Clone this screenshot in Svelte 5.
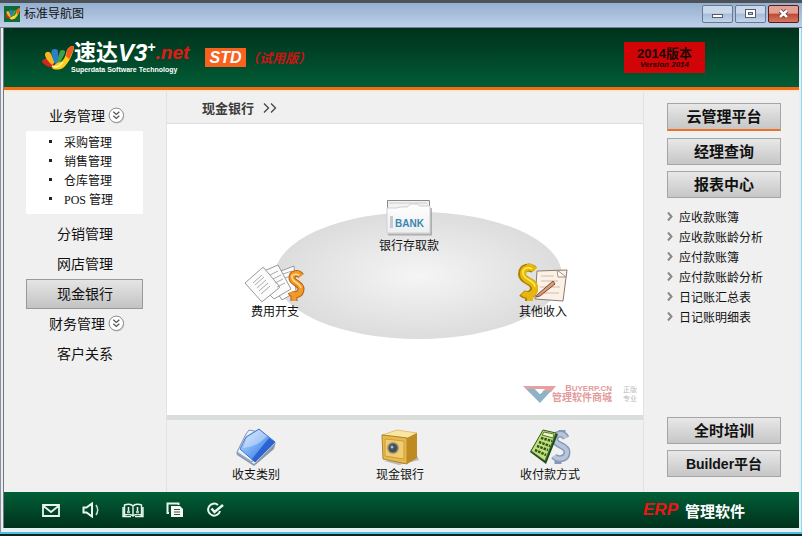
<script>
  const subItems = ['采购管理', '销售管理', '仓库管理', 'POS 管理'];
  const menu = [
    { name: '分销管理' },
    { name: '网店管理' },
    { name: '现金银行', active: true },
    { name: '财务管理', more: true },
    { name: '客户关系' }
  ];
  const reports = ['应收款账簿', '应收款账龄分析', '应付款账簿', '应付款账龄分析', '日记账汇总表', '日记账明细表'];
</script>

{#snippet hand(w, h)}
  <svg width={w} height={h} viewBox="0 0 32 24" aria-hidden="true">
    <path d="M0 15c2-4 8-2 12 2l-1 5C7 21 1 19 0 15z" fill="#d3261d" />
    <path d="M3 8c1-3 5-3 6 0l4 8-3 3C6 15 3 12 3 8z" fill="#f6b61c" />
    <path d="M10 4c2-2 6-1 6 1l1 12-4 1C11 13 8 7 10 4z" fill="#2d7fc4" />
    <path d="M18 5c2-2 6-1 5 2l-5 10-3-1z" fill="#43a047" />
    <path d="M25 4c2-4 7-5 7-3-1 7-5 16-11 21-4 2-9 2-11 0 2-3 5-6 9-6 4-3 5-8 6-12z" fill="#ffcc1a" />
    <path d="M25 4c2-4 7-5 7-3-1 5-3 9-5 12l-3-3c1-2 0-4 1-6z" fill="#ee5a24" />
    <path d="M10 20c4 2 8 0 11-4" fill="none" stroke="#fff3a0" stroke-width="1.5" />
  </svg>
{/snippet}

{#snippet expand()}
  <svg class="expand" width="17" height="17" viewBox="0 0 17 17" aria-hidden="true">
    <circle cx="9" cy="9.3" r="7.2" fill="#ccc" />
    <circle cx="8.3" cy="8.3" r="7.2" fill="#fff" stroke="#8a8a8a" />
    <path d="M5.3 4.8l3 2.7 3-2.7M5.3 8.8l3 2.7 3-2.7" fill="none" stroke="#555" stroke-width="1.3" />
  </svg>
{/snippet}

<div class="window">
  <div class="titlebar">
    <span class="appicon">{@render hand(15, 12)}</span>
    <span class="title">标准导航图</span>
    <button class="win" aria-label="最小化">
      <svg width="29" height="16" viewBox="0 0 29 16"><rect x="9.500" y="8.500" width="10" height="3" fill="#fff" stroke="#555c70" /></svg>
    </button>
    <button class="win" aria-label="最大化">
      <svg width="29" height="16" viewBox="0 0 29 16"><rect x="9.500" y="3.500" width="10" height="8" fill="#fff" stroke="#555c70" /><rect x="12.500" y="6.500" width="4" height="2" fill="#b9cbe2" stroke="#555c70" /></svg>
    </button>
    <button class="win close" aria-label="关闭">
      <svg width="29" height="16" viewBox="0 0 29 16"><path d="M11 4.500l7 6.500M18 4.500l-7 6.500" stroke="#5a2f2f" stroke-width="4" /><path d="M11 4.500l7 6.500M18 4.500l-7 6.500" stroke="#fff" stroke-width="2.500" /></svg>
    </button>
  </div>

  <div class="client">
    <header>
      {@render hand(32, 24)}
      <div class="brand">
        <div class="name"><span>速达</span><i class="v3">V3</i><sup>+</sup><i class="net">.net</i></div>
        <div class="sub">Superdata Software Technology</div>
      </div>
      <span class="std">STD</span>
      <span class="trial">（试用版）</span>
      <div class="version"><b>2014版本</b><i>Version 2014</i></div>
    </header>

    <main>
      <nav class="left">
        <a href="#top" class="item more">业务管理{@render expand()}</a>
        <ul>
          {#each subItems as s}
            <li><a href="#sub">{s}</a></li>
          {/each}
        </ul>
        {#each menu as m}
          <a href="#menu" class="item" class:active={m.active} class:more={m.more}>{m.name}{#if m.more}{@render expand()}{/if}</a>
        {/each}
      </nav>

      <section class="center">
        <h1>现金银行
          <svg width="14" height="10" viewBox="0 0 14 10" aria-hidden="true"><path d="M1 .5L5.500 5 1 9.500M8 .5L12.500 5 8 9.500" fill="none" stroke="#444" stroke-width="1.300" /></svg>
        </h1>
        <div class="canvas">
          <div class="stage">
            <div class="oval"></div>
            <a href="#bank" class="node bank">
              <svg width="46" height="38" viewBox="0 0 46 38" aria-hidden="true">
                <defs>
                  <linearGradient id="bk" x2="0" y2="1"><stop offset="0" stop-color="#fff" /><stop offset="1" stop-color="#eceef0" /></linearGradient>
                </defs>
                <path d="M2 35.500h43V9" fill="none" stroke="#999" stroke-width="2" opacity=".7" />
                <path d="M1.500 1.500h42v9h-42z" fill="#f2f2f2" stroke="#888" />
                <path d="M3 4h38" stroke="#ccc" />
                <path d="M1 34V9h10l3-1h7l4-3h6l3 2h10v27z" fill="url(#bk)" stroke="#d0d0d0" />
                <rect x="4" y="17" width="3" height="12" fill="#c3cbd0" />
                <text x="9" y="28" font-family="Liberation Sans, sans-serif" font-size="10" font-weight="bold" fill="#3c86b0">BANK</text>
              </svg>
              银行存取款
            </a>
            <a href="#expense" class="node expense">
              <svg width="62" height="40" viewBox="0 0 62 40" aria-hidden="true">
                <g fill="#fbfbfb" stroke="#999">
                  <path d="M37 8l13-5 2 26-14 8-8-12z" />
                  <path d="M20 8l14-6 13 24-17 10-14-14z" />
                  <path d="M1 20L18 5q1-1 2 0l15 18q1 1 0 2L19 38q-1 1-2 0z" />
                </g>
                <path d="M9 20l9-8M11 22l9-8M13 25l9-8M15 28l9-8M17 31l9-8M26 12l8-4M29 16l8-4M31 20l8-4M33 24l8-4M39 11l9-3M41 15l6-2" stroke="#aaa" />
                <path d="M57 13c-3-4-9-3-9 2 0 5 9 5 9 11 0 6-8 8-10 3M53 8v4M50 32v6" fill="none" stroke="#b95b0e" stroke-width="7" />
                <path d="M57 13c-3-4-9-3-9 2 0 5 9 5 9 11 0 6-8 8-10 3M53 8v4M50 32v6" fill="none" stroke="#f09a2b" stroke-width="5" />
                <path d="M55 12c-4-2-8 0-7 3 1 4 8 5 9 10" fill="none" stroke="#ffd98a" stroke-width="1.500" />
              </svg>
              费用开支
            </a>
            <a href="#income" class="node income">
              <svg width="52" height="40" viewBox="0 0 52 40" aria-hidden="true">
                <path d="M20 8l30-1-4 31-28-2z" fill="#fbf1e6" stroke="#8a7a6c" />
                <path d="M40 7l1 7h8z" fill="#fff" stroke="#a58e7c" />
                <path d="M24 13h13M24 18h17M23 24h20M22 30h20" stroke="#d7b9a5" />
                <path d="M20 32l16-14 2 3-15 12-4 1z" fill="#d99a78" stroke="#7c4a38" />
                <path d="M17 7C13 3 5 4 5 11c0 8 12 6 12 14 0 8-9 8-12 5M12 1v6M12 31v7" fill="none" stroke="#b27d05" stroke-width="8" />
                <path d="M18 7C14 3 6 4 6 11c0 8 12 6 12 14 0 8-9 8-12 5M13 1v6M13 31v7" fill="none" stroke="#e6b80f" stroke-width="6" />
                <path d="M15 6C10 3 5 6 6 11c1 6 12 6 12 13" fill="none" stroke="#fff04c" stroke-width="1.500" />
              </svg>
              其他收入
            </a>
          </div>
          <div class="mark">
            <svg width="33" height="18" viewBox="0 0 33 18" aria-hidden="true">
              <path d="M0 1h33l-5 6H17l-5-3H3z" fill="#e5a0a2" />
              <path d="M3 4h9l5 5 4-3h7L17 18z" fill="#8fb3c6" />
              <path d="M12 4l5 5 5-5z" fill="#fff" />
            </svg>
            <div class="shop"><span class="domain">B<small>UYERP.CN</small></span><b>管理软件商城</b></div>
            <div class="tags"><span>正版</span><span>专业</span></div>
          </div>
        </div>
        <div class="shortcuts">
          <a href="#type">
            <svg width="42" height="38" viewBox="0 0 42 38" aria-hidden="true">
              <defs><linearGradient id="bl" x1="0" y1="0" x2="1" y2="1"><stop offset="0" stop-color="#d5e9ff" /><stop offset=".5" stop-color="#6da6f2" /><stop offset="1" stop-color="#2459c8" /></linearGradient></defs>
              <path d="M1 24l18 12 22-22-2 7-20 17L2 27z" fill="#8797ad" />
              <path d="M2 24L11 6l3-4 10 2-7 30z" fill="#e9f0fa" stroke="#7d93bb" />
              <path d="M5 21L11 9 24 1l16 13-20 20z" fill="url(#bl)" stroke="#4775c4" />
              <path d="M34 10l6 4-20 20-3-3z" fill="#2b63d2" />
              <path d="M8 20Q22 19 32 8L24 2 12 10z" fill="#fff" opacity=".35" />
            </svg>
            收支类别
          </a>
          <a href="#cash">
            <svg width="38" height="38" viewBox="0 0 38 38" aria-hidden="true">
              <path d="M3 33l15 4 20-5-2-4z" fill="#bbb" />
              <path d="M1 7L16 2l20 3-9 5z" fill="#fbe6a1" stroke="#c39a3a" stroke-width=".5" />
              <path d="M1 7l25 3v26L2 31z" fill="#e6b94f" stroke="#b0832a" />
              <path d="M26 10l10-5v25l-10 6z" fill="#bf8a22" />
              <path d="M4 11l19 2v18L4 28z" fill="#efcc70" stroke="#cf9c35" />
              <circle cx="12" cy="20" r="6" fill="#a59776" /><circle cx="12" cy="20" r="4.500" fill="#454f59" /><circle cx="11" cy="19" r="1.500" fill="#aeb9c2" />
            </svg>
            现金银行
          </a>
          <a href="#pay">
            <svg width="42" height="38" viewBox="0 0 42 38" aria-hidden="true">
              <path d="M37 10c-3-6-12-5-11 2 1 6 12 5 12 12 0 8-10 8-13 4M33 2v5M29 30v6" fill="none" stroke="#8798b4" stroke-width="7" />
              <path d="M37 10c-3-6-12-5-11 2 1 6 12 5 12 12 0 8-10 8-13 4" fill="none" stroke="#b7c5dc" stroke-width="4" />
              <path d="M1 24L14 2l15 4-12 30z" fill="#1f4b1c" />
              <path d="M2 23L14 2l13 3-11 28z" fill="#c6dd7b" stroke="#386522" />
              <path d="M15 4l10 2-1 4-11-3z" fill="#eff7c9" stroke="#52762a" />
              <path d="M12 10l11 3M10 14l11 4M8 18l11 4M6 22l11 5" stroke="#28581f" stroke-width="2.500" stroke-dasharray="2.500 1" />
            </svg>
            收付款方式
          </a>
        </div>
      </section>

      <aside>
        <button class="big cloud">云管理平台</button>
        <button class="big">经理查询</button>
        <button class="big">报表中心</button>
        <ul>
          {#each reports as r}
            <li>
              <svg width="6" height="9" viewBox="0 0 6 9" aria-hidden="true"><path d="M1 .5l3.500 4L1 8.500" fill="none" stroke="#888" stroke-width="2" /></svg>
              <a href="#report">{r}</a>
            </li>
          {/each}
        </ul>
        <div class="grow"></div>
        <button class="big">全时培训</button>
        <button class="big last">Builder平台</button>
      </aside>
    </main>

    <footer>
      <button aria-label="邮件"><svg width="18" height="14" viewBox="0 0 18 14"><path d="M1 2h16v11H1zM1.500 3L9 9l7.500-6" fill="none" stroke="#e9f5ee" stroke-width="1.800" /></svg></button>
      <button aria-label="声音"><svg width="18" height="16" viewBox="0 0 18 16"><path d="M1.500 5.500h3L10 1.500v13l-5.500-4h-3z" fill="none" stroke="#e9f5ee" stroke-width="2" /><path d="M14 3c2 3 2 7 0 10" fill="none" stroke="#c5e0d0" stroke-width="1.500" /></svg></button>
      <button aria-label="帮助"><svg width="22" height="15" viewBox="0 0 22 15"><path d="M11 3C9 .8 5 .8 2.500 2v10C5 11 9 11 11 13c2-2 6-2 8.500-1V2C17 .8 13 .8 11 3zM11 3v10M1 4v9.500h8M21 4v9.500h-8M5 9h3M14 9h3" fill="none" stroke="#e9f5ee" stroke-width="1.400" /><path d="M6.500 4v4M15.500 4v4" stroke="#e9f5ee" stroke-width="1.500" /></svg></button>
      <button aria-label="复制"><svg width="18" height="16" viewBox="0 0 18 16"><path d="M3 11H1.500V1.500h11V3" fill="none" stroke="#e9f5ee" stroke-width="2" /><path d="M5 4h9l3 3v8H5z" fill="#f4faf6" /><path d="M8 7.500h6M8 10h6M8 12.500h6" stroke="#3b5044" stroke-width="1.200" /></svg></button>
      <button aria-label="完成"><svg width="19" height="16" viewBox="0 0 19 16"><path d="M12 3A6 6 0 1 0 14 9" fill="none" stroke="#e9f5ee" stroke-width="2" /><path d="M5.500 6.500l3 3.500L17 3" fill="none" stroke="#e9f5ee" stroke-width="2.500" /></svg></button>
      <span class="erp">ERP</span><b class="soft">管理软件</b>
    </footer>
  </div>
</div>

<style>
  :global(body) { margin: 0; }
  .window {
    box-sizing: border-box;
    min-height: 100vh;
    display: flex;
    flex-direction: column;
    padding: 0 3px 6px 3px;
    border-top: 3px solid #4b5357;
    border-bottom: 2px solid #10202a;
    background: #e6eef5;
    box-shadow: inset 0 -2px #49c3dc, inset -1px 0 #8bdcf0, inset 1px 0 #8e8e9c;
    font-family: "Liberation Sans", "Noto Sans CJK SC", sans-serif;
    color: #111;
  }
  a { color: inherit; text-decoration: none; }
  ul { list-style: none; margin: 0; padding: 0; }
  svg { display: block; flex: none; }
  button { padding: 0; font: inherit; color: inherit; cursor: pointer; }

  .titlebar {
    height: 24px;
    display: flex;
    align-items: center;
    gap: 2px;
    margin: 0 -3px;
    padding: 0 3px 2px 4px;
    box-sizing: border-box;
    height: 25px;
    background: linear-gradient(#95afd0, #bdd0e8);
    border-bottom: 1px solid #747e8c;
  }
  .appicon { width: 16px; height: 16px; display: grid; place-items: center; background: #0d6b38; }
  .title { flex: 1; padding-left: 2px; font-size: 12px; line-height: 16px; }
  .win {
    width: 31px;
    height: 18px;
    box-sizing: border-box;
    border: 1px solid #68788f;
    border-radius: 2px;
    background: linear-gradient(#c9d8ea 45%, #a7bdd8 50%, #c1d4ea);
  }
  .close { border-color: #571d1b; background: linear-gradient(#e3a194 45%, #c04836 50%, #d6775e); }

  .client { flex: 1; display: flex; flex-direction: column; border-left: 1px solid #777; background: #f0f0f0; }
  header {
    box-sizing: border-box;
    height: 62px;
    display: flex;
    align-items: center;
    padding: 0 94px 0 38px;
    border-bottom: 3px solid #f26d16;
    background: linear-gradient(#00311c, #015c35);
    color: #fff;
  }
  .brand { width: 131px; white-space: nowrap; }
  .name { display: flex; align-items: center; height: 23px; font-weight: bold; font-size: 22px; line-height: 22px; }
  .v3 { font-size: 24px; }
  sup { align-self: flex-start; font-size: 14px; line-height: 12px; }
  .net { color: #e01a14; font-size: 19px; }
  .sub { margin: 2px 0 0 -3px; font-size: 7px; font-weight: bold; line-height: 8px; }
  .std { width: 41px; height: 19px; background: #f9611f; text-align: center; font: italic bold 16px/19px "Liberation Sans", sans-serif; }
  .trial { font-size: 13px; font-style: italic; font-weight: bold; color: #c91414; }
  .version {
    width: 81px;
    height: 31px;
    margin-left: auto;
    display: flex;
    flex-direction: column;
    align-items: center;
    justify-content: center;
    background: #d10508;
    color: #1c0805;
  }
  .version b { font-size: 13px; line-height: 15px; }
  .version i { font-size: 8px; font-weight: bold; line-height: 8px; }

  main { flex: 1; display: flex; border-top: 2px solid #fbe9d5; }
  .left { box-sizing: border-box; width: 162px; flex: none; padding: 9px 23px 0 22px; }
  .item {
    box-sizing: border-box;
    height: 30px;
    display: flex;
    align-items: center;
    justify-content: center;
    gap: 3px;
    border: 1px solid transparent;
    padding: 0 0 2px 1px;
    font-size: 14px;
  }
  .item.more { padding-left: 5px; }
  .item.active { border-color: #999; background: linear-gradient(#e5e5e5, #c3c3c3); }
  .left ul { padding: 1px 0 6px; margin-bottom: 5px; background: #fff; }
  .left li { height: 19px; display: flex; align-items: center; font: 12px "Liberation Serif", "Noto Sans CJK SC", serif; }
  .left li::before { content: ""; width: 3px; height: 3px; margin: 0 12px 0 23px; background: #222; }

  .center { flex: 1; display: flex; flex-direction: column; min-width: 0; border: 0 solid #e2e2e2; border-width: 0 1px; }
  h1 {
    height: 31px;
    display: flex;
    align-items: center;
    gap: 9px;
    margin: 0;
    padding: 0 0 0 35px;
    font-size: 13px;
    color: #3c3c3c;
  }
  .canvas { flex: 1; position: relative; background: #fff; border-top: 1px solid #ddd; border-bottom: 5px solid #dadedb; min-height: 280px; }
  .stage { position: relative; width: 476px; height: 280px; margin: 0 auto; }
  .oval {
    position: absolute;
    left: 108px;
    top: 88px;
    width: 287px;
    height: 127px;
    border-radius: 50%;
    background: radial-gradient(#f5f5f5, #d2d2d2);
  }
  .node { position: absolute; display: flex; flex-direction: column; align-items: center; font-size: 12px; line-height: 18px; white-space: nowrap; }
  .bank { left: 212px; top: 75px; }
  .expense { left: 77px; top: 139px; }
  .income { left: 350px; top: 139px; }
  .mark { position: absolute; right: 6px; bottom: 12px; display: flex; align-items: center; color: #e29a9c; }
  .shop { display: flex; flex-direction: column; align-items: flex-end; line-height: 9px; margin-left: -4px; }
  .domain { font-size: 9px; font-weight: bold; }
  .domain small { font-size: 8px; }
  .shop b { font-size: 10px; line-height: 10px; }
  .tags { display: flex; flex-direction: column; margin-left: 11px; font-size: 7px; line-height: 9px; color: #bbb; }

  .shortcuts { height: 72px; box-sizing: border-box; display: flex; justify-content: space-between; padding: 8px 63px 0 65px; }
  .shortcuts a { display: flex; flex-direction: column; align-items: center; font-size: 12px; line-height: 18px; }

  aside { box-sizing: border-box; width: 155px; flex: none; display: flex; flex-direction: column; padding: 11px 18px 15px 23px; }
  .big {
    height: 27px;
    margin-bottom: 6px;
    box-sizing: border-box;
    border: 1px solid #a5a5a5;
    background: linear-gradient(#e8e8e8, #c6c6c6);
    font-size: 15px;
    font-weight: bold;
    line-height: 24px;
  }
  .cloud { height: 28px; margin-bottom: 7px; border-bottom: 2px solid #ea7325; }
  .big.last { margin-bottom: 0; font-size: 14px; }
  aside ul { padding-top: 2px; }
  aside li { height: 20px; display: flex; align-items: center; gap: 6px; font-size: 12px; }
  .grow { flex: 1; }

  footer { box-sizing: border-box; height: 36px; display: flex; align-items: center; gap: 22px; padding: 0 54px 0 38px; background: linear-gradient(#015f37, #00311c); }
  footer button { border: 0; background: none; }
  .erp { margin-left: auto; color: #ee1414; font-size: 17px; font-style: italic; font-weight: bold; }
  .soft { margin-left: -15px; color: #fff; font-size: 15px; }
</style>
